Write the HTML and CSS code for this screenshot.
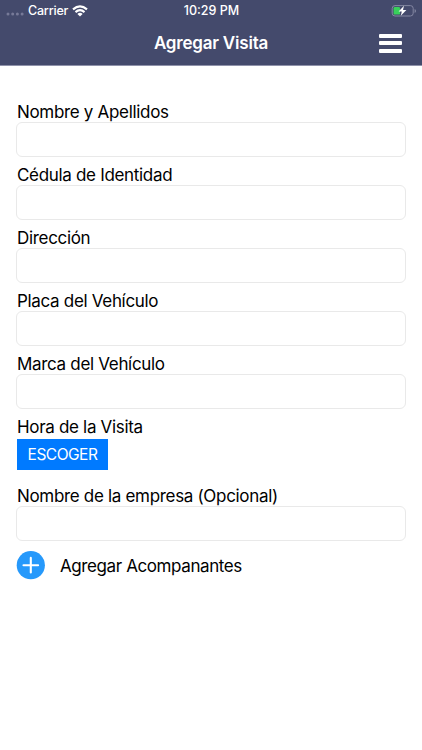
FILE: index.html
```html
<!doctype html>
<html lang="es">
    <head>
        <meta charset="utf-8">
        <title>Agregar Visita</title>
        <link rel="stylesheet" href="styles.css">
    </head>
    <body>
        <header>
            <div class="status">
                <div class="carrier">
                    <svg width="18" height="4" viewBox="0 0 18 4" fill="#777a98">
                        <circle cx="2" cy="2" r="1.5" />
                        <circle cx="6.7" cy="2" r="1.5" />
                        <circle cx="11.4" cy="2" r="1.5" />
                        <circle cx="16.1" cy="2" r="1.5" />
                    </svg>
                    <span>Carrier</span>
                    <svg class="wifi" width="16" height="12" viewBox="0 0 16 12" fill="none" stroke="#fff" stroke-width="2.1">
                        <path d="M1 4.4Q8 -1.8 15 4.4" />
                        <path d="M3.5 7.1Q8 3.1 12.5 7.1" />
                        <path d="M8 11.5L5.4 8.9Q8 6.8 10.6 8.9Z" fill="#fff" stroke="none" />
                    </svg>
                </div>
                <span class="time">10:29 PM</span>
                <svg class="battery" width="26" height="12" viewBox="0 0 26 12">
                    <rect x="1.2" y="0.6" width="21" height="10.4" rx="2.8" fill="none" stroke="#8487a2" />
                    <path d="M23.6 4v4q1.4-.5 1.4-2t-1.4-2z" fill="#8487a2" />
                    <rect x="2.6" y="2" width="6.4" height="7.6" rx="1.2" fill="#38cf5b" />
                    <path d="M13 .8L7.6 6.6H10.8L9.8 10.8L15.4 5H12Z" fill="#fff" />
                </svg>
            </div>
            <div class="navbar">
                <h1>Agregar Visita</h1>
                <button class="menu" aria-label="Menú">
                    <span></span>
                    <span></span>
                    <span></span>
                </button>
            </div>
        </header>
        <main>
            <div class="field">
                <label for="nombre">Nombre y Apellidos</label>
                <input type="text" id="nombre">
            </div>
            <div class="field">
                <label for="cedula">Cédula de Identidad</label>
                <input type="text" id="cedula">
            </div>
            <div class="field">
                <label for="direccion">Dirección</label>
                <input type="text" id="direccion">
            </div>
            <div class="field">
                <label for="placa">Placa del Vehículo</label>
                <input type="text" id="placa">
            </div>
            <div class="field">
                <label for="marca">Marca del Vehículo</label>
                <input type="text" id="marca">
            </div>
            <div class="field hora">
                <label>Hora de la Visita</label>
                <button class="escoger">ESCOGER</button>
            </div>
            <div class="field">
                <label for="empresa">Nombre de la empresa (Opcional)</label>
                <input type="text" id="empresa">
            </div>
            <div class="add">
                <svg width="29" height="29" viewBox="0 0 29 29">
                    <circle cx="14.8" cy="14.2" r="14.1" fill="#2699fb" />
                    <path d="M14.8 6.9v14.6M7.5 14.2h14.6" stroke="#fff" stroke-width="2.1" stroke-linecap="round" />
                </svg>
                <span>Agregar Acompanantes</span>
            </div>
        </main>
    </body>
</html>
```
FILE: styles.css
```css
body {
    font-family: Inter, sans-serif;
    margin: 0;
    min-height: 100vh;
    background: white;
    color: black;
}

header {
    box-sizing: border-box;
    height: 66px;
    background: #444a6c;
    border-bottom: 1px solid #8f92aa;
    color: white;
}

.status {
    display: grid;
    grid-template-columns: 1fr auto 1fr;
    align-items: center;
    height: 21px;
    padding: 0 5px 0 6px;
    font-size: 12.5px;
    font-weight: 500;
}

.carrier {
    display: flex;
    align-items: center;
    gap: 4px;
    letter-spacing: -0.2px;
}

.carrier svg:first-child {
    margin-top: 7px;
}

.battery {
    justify-self: end;
}

.navbar {
    display: grid;
    grid-template-columns: 1fr auto 1fr;
    align-items: center;
    height: 44px;
    padding: 0 20px;
}

h1 {
    grid-column: 2;
    margin: 0;
    font-size: 17px;
    font-weight: 600;
    letter-spacing: -0.2px;
}

.menu {
    justify-self: end;
    display: flex;
    flex-direction: column;
    justify-content: space-between;
    width: 23px;
    height: 19px;
    padding: 0;
    border: none;
    background: none;
}

.menu span {
    height: 4px;
    border-radius: 1px;
    background: white;
}

main {
    padding: 35px 16px 0;
    font-size: 17px;
    letter-spacing: -0.32px;
}

.field {
    display: flex;
    flex-direction: column;
    margin-bottom: 7px;
}

label {
    height: 21px;
    line-height: 23px;
    padding-left: 1px;
}

input {
    box-sizing: border-box;
    width: 100%;
    height: 35px;
    padding: 0 10px;
    border: 1px solid #e9e9e9;
    border-radius: 6px;
    background: white;
    font: inherit;
}

.hora {
    align-items: flex-start;
    margin-bottom: 15px;
}

.escoger {
    width: 91px;
    height: 31px;
    margin: 2px 0 0 1px;
    padding: 0;
    border: none;
    background: #007aff;
    color: white;
    font-family: inherit;
    font-size: 15.5px;
    letter-spacing: -0.5px;
}

.add {
    display: flex;
    align-items: center;
    gap: 15px;
    margin-top: 10px;
    letter-spacing: -0.4px;
}
```
